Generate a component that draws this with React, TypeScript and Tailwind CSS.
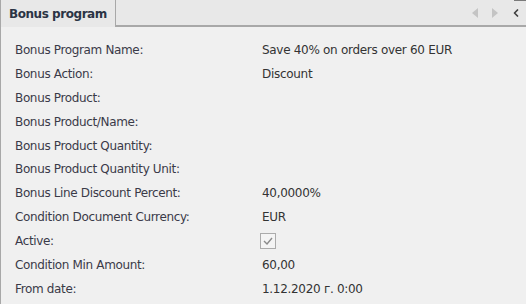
import { ChevronLeft } from 'lucide-react';

const rows: { label: string; value?: string; check?: boolean }[] = [
  { label: 'Bonus Program Name:', value: 'Save 40% on orders over 60 EUR' },
  { label: 'Bonus Action:', value: 'Discount' },
  { label: 'Bonus Product:' },
  { label: 'Bonus Product/Name:' },
  { label: 'Bonus Product Quantity:' },
  { label: 'Bonus Product Quantity Unit:' },
  { label: 'Bonus Line Discount Percent:', value: '40,0000%' },
  { label: 'Condition Document Currency:', value: 'EUR' },
  { label: 'Active:', check: true },
  { label: 'Condition Min Amount:', value: '60,00' },
  { label: 'From date:', value: '1.12.2020 г. 0:00' },
];

function Arrow({ dir }: { dir: 'left' | 'right' }) {
  return (
    <svg width="6" height="10" viewBox="0 0 6 10">
      {dir === 'left' ? <path d="M6 0 L0 5 L6 10 Z" fill="#c4c4c4" /> : <path d="M0 0 L6 5 L0 10 Z" fill="#c4c4c4" />}
    </svg>
  );
}

export default function App() {
  return (
    <div className="w-[526px] h-[304px] overflow-hidden bg-[#f0f0f0] text-[12px] font-['DejaVu_Sans',sans-serif] flex flex-col">
      {/* Tab strip */}
      <div className="flex h-[27px] shrink-0 bg-[#e8e8e8]">
        <div className="w-[116px] border-l border-r border-[#a8a8a8] flex items-center pl-[8px] font-bold text-[12px] text-[#2b3445] tracking-[-0.45px]">
          Bonus program
        </div>
        <div className="flex-1 border-b-2 border-[#a8a8a8] flex items-center justify-end pr-[4px] relative">
          <Arrow dir="left" />
          <div className="ml-[14px]"><Arrow dir="right" /></div>
          <ChevronLeft className="w-[12px] h-[12px] text-[#404040] ml-[12px]" strokeWidth={3.5} />
          <div className="absolute right-0 top-0 w-[12px] h-[1px] bg-[#7a7a7a]" />
        </div>
      </div>

      {/* Form body */}
      <div className="flex-1 border-l border-[#a8a8a8] pt-[11px] pl-[14px]">
        {rows.map((r) => (
          <div key={r.label} className="flex items-center h-[23.9px] text-[#3a3a48]">
            <div className="w-[247px] tracking-[-0.35px]">{r.label}</div>
            <div className="flex-1 tracking-[-0.3px] text-[#333]">
              {r.check ? (
                <div className="w-[16px] h-[16px] border border-[#ababab] bg-[#f4f4f4] flex items-center justify-center -ml-[2px]">
                  <svg width="10" height="8" viewBox="0 0 10 8">
                    <path d="M1 4 L4 7 L9 1" fill="none" stroke="#8a8a8a" strokeWidth="1.4" />
                  </svg>
                </div>
              ) : (
                r.value
              )}
            </div>
          </div>
        ))}
      </div>
    </div>
  );
}
